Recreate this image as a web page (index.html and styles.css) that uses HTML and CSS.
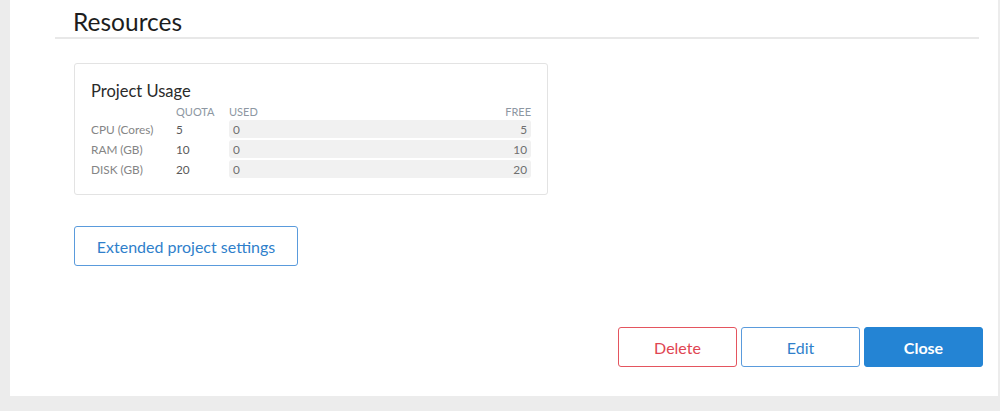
FILE: index.html
```html
<!DOCTYPE html>
<html lang="en">
<head>
  <meta charset="UTF-8">
  <title>Project details</title>
  <link rel="stylesheet" href="styles.css">
</head>
<body>
  <div class="panel">
    <!-- resources section -->
    <div class="section-head">
      <h2 class="section-title">Resources</h2>
    </div>

    <div class="usage-card">
      <div class="usage-title">Project Usage</div>
      <div class="usage-grid">
        <div></div>
        <div class="col-head">QUOTA</div>
        <div class="col-head bar-head"><span>USED</span><span>FREE</span></div>

        <div class="usage-label">CPU (Cores)</div>
        <div class="usage-quota">5</div>
        <div class="usage-bar"><span>0</span><span>5</span></div>

        <div class="usage-label">RAM (GB)</div>
        <div class="usage-quota">10</div>
        <div class="usage-bar"><span>0</span><span>10</span></div>

        <div class="usage-label">DISK (GB)</div>
        <div class="usage-quota">20</div>
        <div class="usage-bar"><span>0</span><span>20</span></div>
      </div>
    </div>

    <button class="btn btn-outline ext-btn">Extended project settings</button>

    <!-- footer actions -->
    <div class="actions">
      <button class="btn btn-danger">Delete</button>
      <button class="btn btn-outline">Edit</button>
      <button class="btn btn-primary">Close</button>
    </div>
  </div>
</body>
</html>
```

FILE: styles.css
```css
body {
  margin: 0;
  background-color: #ececec;
  font-family: Lato, "Liberation Sans", sans-serif;
  height: 411px;
  overflow: hidden;
}

.panel {
  margin-left: 10px;
  width: 988px;
  height: 396px;
  background: #fff;
  padding-top: 7px;
  box-sizing: border-box;
  display: flex;
  flex-direction: column;
}

/* heading */
.section-head {
  margin-left: 45px;
  margin-right: 19px;
  border-bottom: 2px solid #e8e8e8;
}

.section-title {
  margin: 0 0 0 18px;
  font-size: 24.5px;
  line-height: 30px;
  font-weight: normal;
  color: #1d1d1d;
}

/* usage card */
.usage-card {
  margin: 24px 0 0 64px;
  width: 474px;
  box-sizing: border-box;
  border: 1px solid #e3e3e3;
  border-radius: 3px;
  padding: 17px 16px 16px 16px;
}

.usage-title {
  font-size: 16.5px;
  line-height: 20px;
  color: #2a2a2a;
  margin-bottom: 5px;
}

.usage-grid {
  display: grid;
  grid-template-columns: 85px 53px 1fr;
  grid-template-rows: 12px 18px 18px 18px;
  row-gap: 2px;
  align-items: center;
  font-size: 11.8px;
}

.col-head {
  font-size: 11px;
  line-height: 12px;
  color: #8d97a2;
}

.bar-head {
  display: flex;
  justify-content: space-between;
}

.usage-label {
  color: #858585;
}

.usage-quota {
  color: #5a5a5a;
}

.usage-bar {
  height: 18px;
  background: #f1f1f1;
  border-radius: 3px;
  display: flex;
  justify-content: space-between;
  align-items: center;
  padding: 0 4px;
  color: #6f6f6f;
}

/* buttons */
.btn {
  font-family: Lato, "Liberation Sans", sans-serif;
  font-size: 16px;
  height: 40px;
  border-radius: 3px;
  background: #fff;
  cursor: pointer;
  padding: 0;
}

.btn-outline {
  border: 1px solid #5a9bdc;
  color: #2f7fcb;
}

.btn-danger {
  border: 1px solid #e4555f;
  color: #df4552;
}

.btn-primary {
  border: 1px solid #2484d4;
  background: #2484d4;
  color: #fff;
  font-weight: bold;
}

.ext-btn {
  margin: 31px 0 0 64px;
  width: 224px;
}

.actions {
  display: flex;
  justify-content: flex-end;
  gap: 4px;
  margin: 61px 15px 0 0;
}

.actions .btn {
  width: 119px;
}
```
